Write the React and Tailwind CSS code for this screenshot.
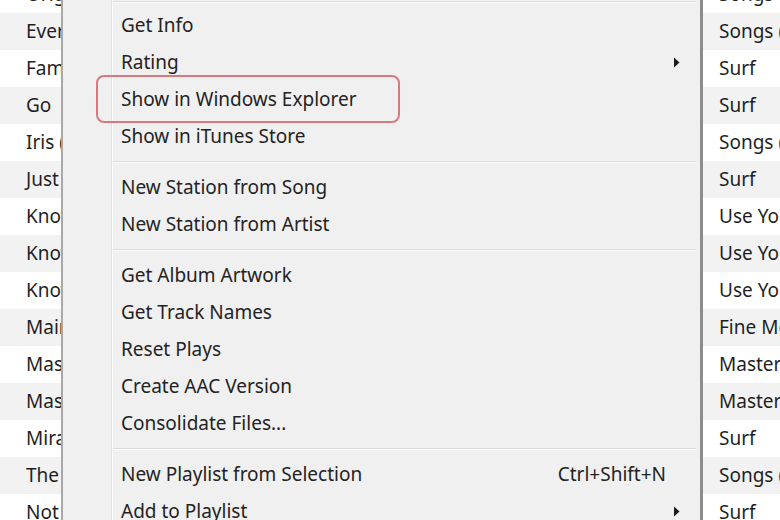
import { Fragment } from 'react';

const leftNames = ['Original', 'Everything', 'Family', 'Go', 'Iris (', 'Just', 'Know', 'Know', 'Know', 'Main', 'Master', 'Master', 'Miracle', 'The', 'Not'];
const albums = ['Songs', 'Songs (', 'Surf', 'Surf', 'Songs (', 'Surf', 'Use Your', 'Use Your', 'Use Your', 'Fine Mess', 'Master', 'Master', 'Surf', 'Songs (', 'Surf'];

const sections = [
  [{ label: 'Get Info' }, { label: 'Rating', sub: true }, { label: 'Show in Windows Explorer', marked: true }, { label: 'Show in iTunes Store' }],
  [{ label: 'New Station from Song' }, { label: 'New Station from Artist' }],
  [
    { label: 'Get Album Artwork' },
    { label: 'Get Track Names' },
    { label: 'Reset Plays' },
    { label: 'Create AAC Version' },
    { label: 'Consolidate Files...' },
  ],
  [{ label: 'New Playlist from Selection', shortcut: 'Ctrl+Shift+N' }, { label: 'Add to Playlist', sub: true }],
];

function Separator() {
  return (
    <div className="h-[14px] flex items-center pl-[50px] pr-[4px]">
      <div className="w-full h-[2px] border-t border-[#d9d9d9] border-b border-b-white" />
    </div>
  );
}

function SubArrow() {
  return (
    <svg width="7" height="11" viewBox="0 0 7 11" className="absolute right-[20px]">
      <path d="M1 0.5 L6.5 5.5 L1 10.5 Z" fill="#1a1a1a" />
    </svg>
  );
}

function MenuItem({ item }) {
  return (
    <div className="relative h-[37px] flex items-center pl-[58px] pr-[34px] text-[19px] text-[#232323]">
      <span className="flex-1">{item.label}</span>
      {item.shortcut && <span>{item.shortcut}</span>}
      {item.sub && <SubArrow />}
      {item.marked && (
        <div className="absolute left-[33px] top-[-6px] w-[304px] h-[48px] border-2 border-[#da7880] rounded-[8px]" />
      )}
    </div>
  );
}

export default function App() {
  return (
    <div
      className="relative w-[780px] h-[520px] overflow-hidden bg-white"
      style={{ fontFamily: '"Noto Sans", "Open Sans", sans-serif' }}
    >
      {/* track list behind the menu */}
      <div className="mt-[-24px]">
        {leftNames.map((name, i) => (
          <div
            key={i}
            className={`h-[37px] flex items-center text-[19px] text-[#1f1f1f] ${i % 2 === 1 ? 'bg-[#f2f2f2]' : 'bg-white'}`}
          >
            <span className="shrink-0 pl-[26px] w-[703px] whitespace-nowrap overflow-hidden">{name}</span>
            <span className="shrink-0 pl-[16px] whitespace-nowrap">{albums[i]}</span>
          </div>
        ))}
      </div>

      {/* context menu */}
      <div className="absolute left-[61px] top-0 w-[642px] h-[520px] bg-[#f0f0f0] border-l-2 border-l-[#a9a9a9] border-r-[3px] border-r-[#8c8c8c]">
        <div className="absolute left-[48px] top-0 bottom-0 w-[2px] border-l border-[#e2e2e2] border-r border-r-white" />
        <div className="relative h-[7px] pl-[50px] pr-[4px] pt-[1px]">
          <div className="w-full h-[2px] border-t border-[#d9d9d9] border-b border-b-white" />
        </div>
        {sections.map((sec, si) => (
          <Fragment key={si}>
            {si > 0 && <Separator />}
            {sec.map((item) => (
              <MenuItem key={item.label} item={item} />
            ))}
          </Fragment>
        ))}
      </div>
    </div>
  );
}
